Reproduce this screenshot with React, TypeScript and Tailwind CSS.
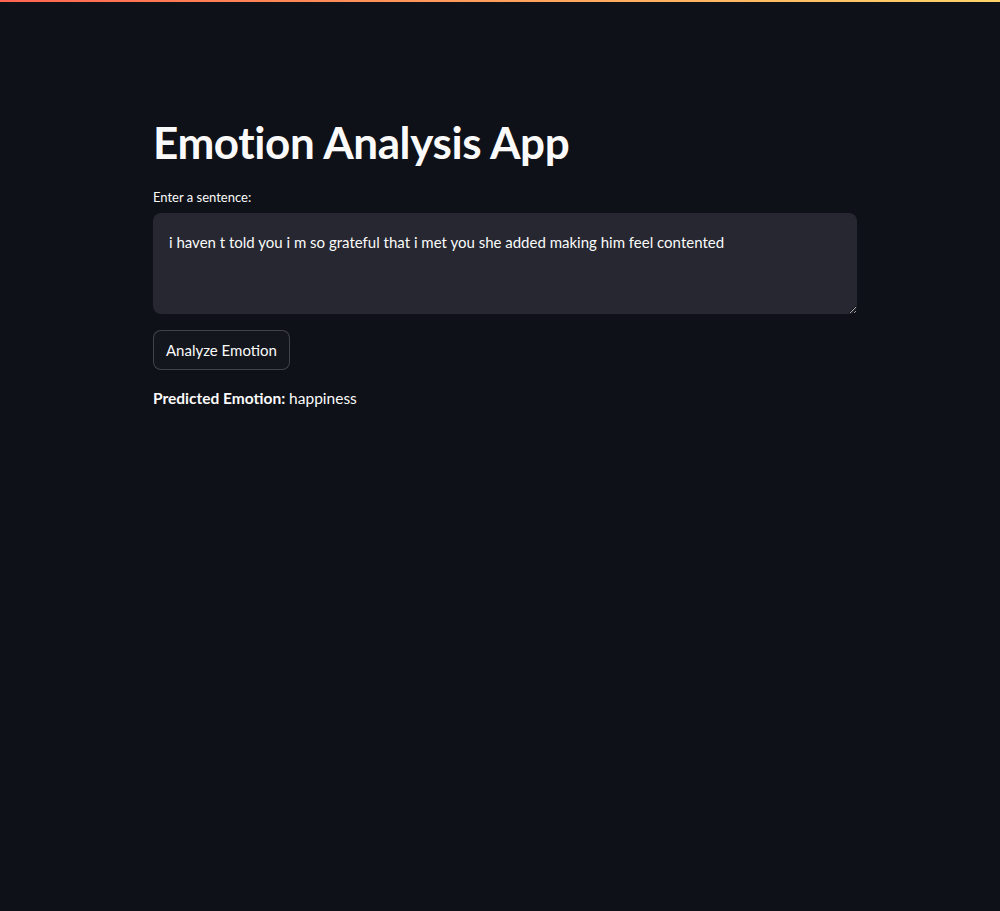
import React from 'react';

const App: React.FC = () => {
  const [text, setText] = React.useState(
    'i haven t told you i m so grateful that i met you she added making him feel contented'
  );

  return (
    <div className="min-h-[911px] bg-[#0e1117] text-[#fafafa] font-['Lato','Noto_Sans',sans-serif]">
      <div className="h-[2px] bg-gradient-to-r from-[#ff6450] to-[#ffd468]" />

      <main className="w-[704px] ml-[153px] pt-[114px] flex flex-col">
        <h1 className="text-[44px] font-bold leading-[52px] tracking-[-0.4px] mb-[20px]">
          Emotion Analysis App
        </h1>

        <label className="text-[13px] leading-[18px] mb-[7px]">Enter a sentence:</label>
        <textarea
          value={text}
          onChange={(e) => setText(e.target.value)}
          className="h-[101px] w-full bg-[#262730] rounded-lg px-[16px] py-[18px] text-[15px] leading-[22px] text-[#fafafa] outline-none resize-y"
        />

        <div className="mt-[16px]">
          <button className="h-[40px] px-[12px] rounded-lg border border-[#fafafa]/20 bg-[#13161d] text-[15px]">
            Analyze Emotion
          </button>
        </div>

        <p className="mt-[17px] text-[15.5px] leading-[22px]">
          <span className="font-bold">Predicted Emotion:</span> happiness
        </p>
      </main>
    </div>
  );
};

export default App;
